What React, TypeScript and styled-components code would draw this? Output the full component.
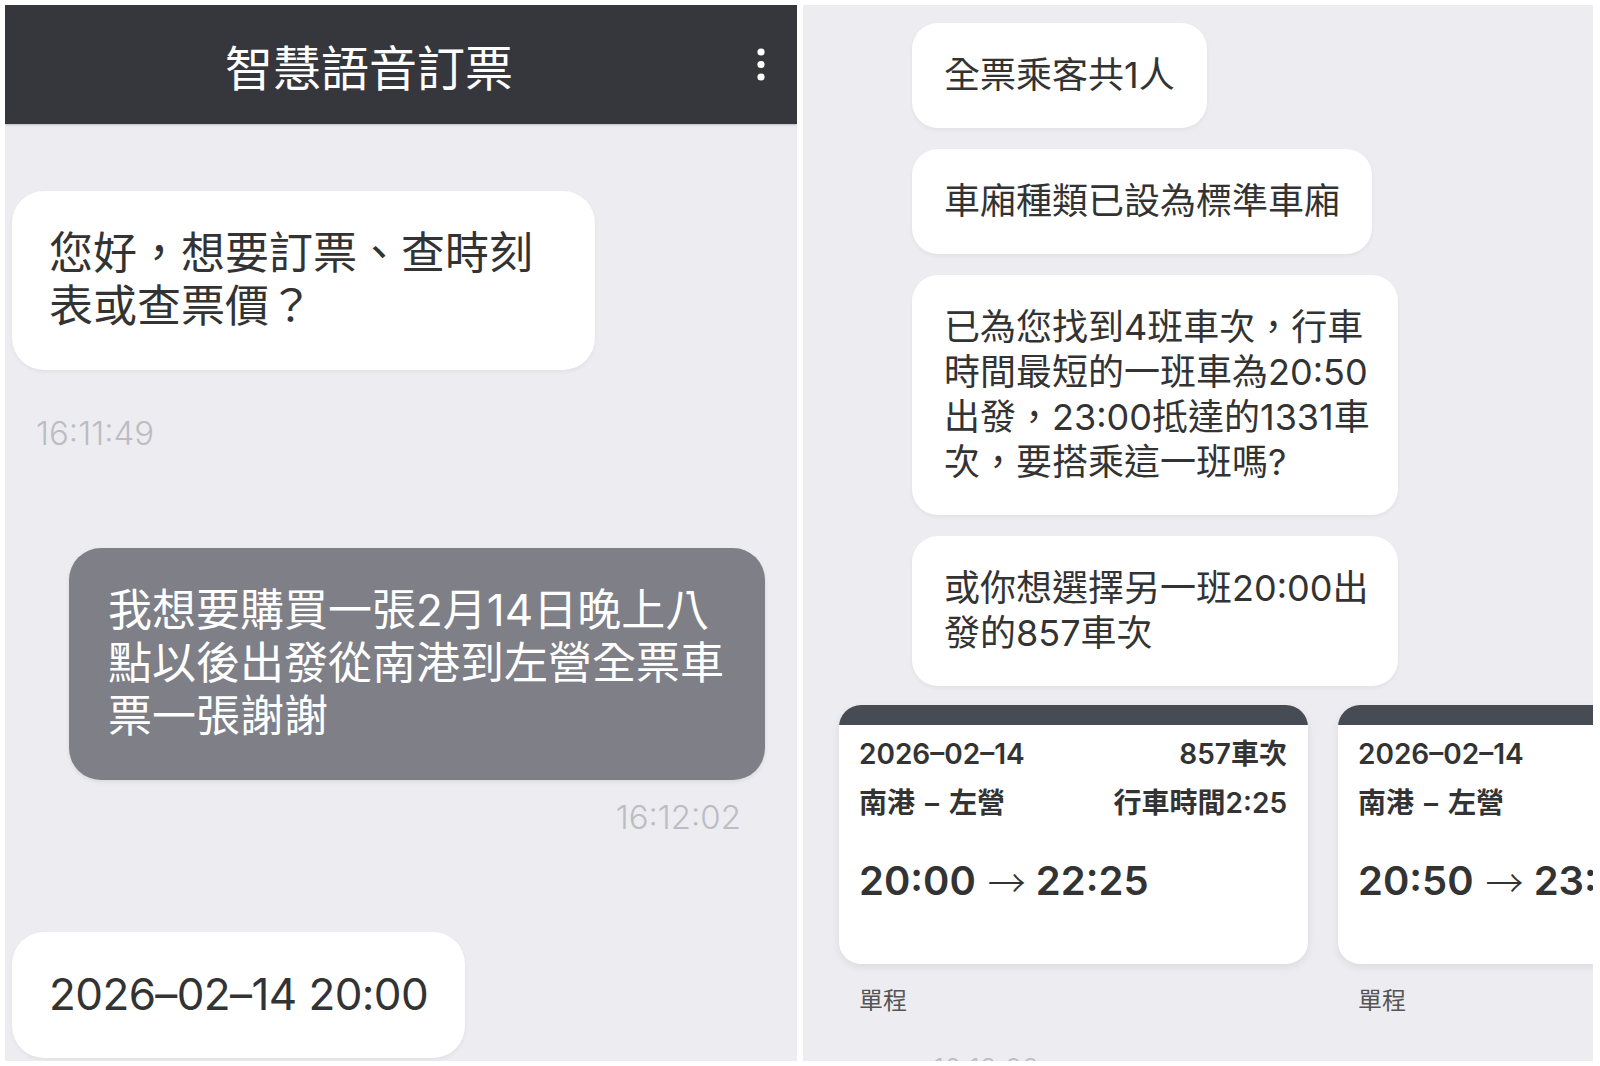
import React from "react";
import styled, { createGlobalStyle } from "styled-components";

const GlobalStyle = createGlobalStyle`
  html, body { margin: 0; padding: 0; background: #ffffff; }
  body {
    font-family: "Inter", "Noto Sans CJK TC", sans-serif;
    -webkit-font-smoothing: antialiased;
  }
  * { box-sizing: border-box; }
`;

const Page = styled.div`
  display: flex;
  gap: 6px;
  padding: 5px;
  width: 1600px;
  height: 1066px;
  overflow: hidden;
`;

const Panel = styled.section<{ $width: number }>`
  width: ${(p) => p.$width}px;
  height: 1056px;
  flex-shrink: 0;
  background: #ececf1;
  overflow: hidden;
  display: flex;
  flex-direction: column;
`;

const Header = styled.header`
  height: 119px;
  flex-shrink: 0;
  background: #35373c;
  display: flex;
  align-items: center;
  box-shadow: 0 1px 2px rgba(0, 0, 0, 0.2);
  position: relative;
  z-index: 1;
`;

const Title = styled.h1`
  flex: 1;
  margin: 0;
  text-align: center;
  color: #ffffff;
  font-family: "Noto Sans CJK TC", sans-serif;
  font-weight: 400;
  font-size: 48px;
  line-height: 1;
`;

const MenuButton = styled.div`
  width: 64px;
  padding-right: 8px;
  display: flex;
  justify-content: center;
  align-items: center;
`;

const LeftChat = styled.div`
  display: flex;
  flex-direction: column;
  align-items: flex-start;
  padding: 0 32px 0 7px;
`;

const BotBubble = styled.div<{ $width?: number; $top: number }>`
  ${(p) => (p.$width ? `width: ${p.$width}px;` : "")}
  margin-top: ${(p) => p.$top}px;
  background: #ffffff;
  color: #333333;
  border-radius: 32px;
  padding: 36px 37px 37px;
  font-size: 44px;
  line-height: 53px;
  white-space: nowrap;
  box-shadow: 0 2px 4px rgba(0, 0, 0, 0.05);
`;

const Digits = styled.span`
  letter-spacing: -0.6px;
`;

const UserBubble = styled.div<{ $width: number; $top: number }>`
  align-self: flex-end;
  width: ${(p) => p.$width}px;
  margin-top: ${(p) => p.$top}px;
  background: #7e7f87;
  color: #ffffff;
  border-radius: 32px;
  padding: 36px 39px 37px;
  font-size: 44px;
  line-height: 53px;
  white-space: nowrap;
  box-shadow: 0 2px 4px rgba(0, 0, 0, 0.08);
`;

const Timestamp = styled.div<{ $top: number; $right?: boolean; $size: number; $inset: number }>`
  margin-top: ${(p) => p.$top}px;
  ${(p) =>
    p.$right
      ? `align-self: flex-end; margin-right: ${p.$inset}px;`
      : `align-self: flex-start; margin-left: ${p.$inset}px;`}
  font-family: "Inter", sans-serif;
  font-weight: 300;
  font-size: ${(p) => p.$size}px;
  line-height: ${(p) => Math.round(p.$size * 1.1)}px;
  color: #bcbcc2;
  white-space: nowrap;
`;

const RightList = styled.div`
  display: flex;
  flex-direction: column;
  align-items: flex-start;
  gap: 21px;
  padding: 18px 0 0 109px;
`;

const SmallBubble = styled.div<{ $width?: number }>`
  ${(p) => (p.$width ? `width: ${p.$width}px;` : "")}
  background: #ffffff;
  color: #333333;
  border-radius: 26px;
  padding: 30px 32px;
  font-size: 36px;
  line-height: 45px;
  white-space: nowrap;
  box-shadow: 0 2px 4px rgba(0, 0, 0, 0.05);
`;

const Carousel = styled.div`
  display: flex;
  gap: 30px;
  margin-top: 19px;
  padding-left: 36px;
`;

const CardColumn = styled.div`
  flex-shrink: 0;
  display: flex;
  flex-direction: column;
`;

const Card = styled.div`
  width: 469px;
  height: 259px;
  background: #ffffff;
  border-radius: 22px;
  overflow: hidden;
  box-shadow: 0 3px 8px rgba(0, 0, 0, 0.08);
  display: flex;
  flex-direction: column;
`;

const CardBar = styled.div`
  height: 20px;
  flex-shrink: 0;
  background: #474b54;
`;

const CardBody = styled.div`
  padding: 12px 21px 0 20px;
  display: flex;
  flex-direction: column;
`;

const CardRow = styled.div<{ $top?: number }>`
  display: flex;
  justify-content: space-between;
  margin-top: ${(p) => p.$top ?? 0}px;
  font-size: 28px;
  line-height: 34px;
  font-weight: 600;
  color: #333333;
  white-space: nowrap;
`;

const RouteDash = styled.span`
  display: inline-block;
  margin: 0 10px;
`;

const TimeRow = styled.div`
  display: flex;
  align-items: center;
  margin-top: 37px;
  font-size: 40px;
  line-height: 48px;
  font-weight: 600;
  color: #333333;
  white-space: nowrap;
`;

const Arrow = styled.span`
  font-family: "Noto Sans CJK TC", sans-serif;
  font-weight: 300;
  font-size: 38px;
  margin: 0 10px 0 12px;
`;

const TripLabel = styled.div`
  margin-top: 20px;
  padding-left: 20px;
  font-family: "Noto Sans CJK TC", sans-serif;
  font-size: 24px;
  line-height: 30px;
  color: #555555;
`;

const KebabIcon = () => (
  <svg width="10" height="36" viewBox="0 0 10 36" aria-hidden="true">
    <circle cx="5" cy="5" r="3.6" fill="#ffffff" />
    <circle cx="5" cy="17.5" r="3.6" fill="#ffffff" />
    <circle cx="5" cy="30" r="3.6" fill="#ffffff" />
  </svg>
);

type Train = {
  date: string;
  no: string;
  from: string;
  to: string;
  duration: string;
  dep: string;
  arr: string;
};

const trains: Train[] = [
  { date: "2026–02–14", no: "857車次", from: "南港", to: "左營", duration: "行車時間2:25", dep: "20:00", arr: "22:25" },
  { date: "2026–02–14", no: "1331車次", from: "南港", to: "左營", duration: "行車時間2:10", dep: "20:50", arr: "23:00" },
];

const TrainCard = ({ t }: { t: Train }) => (
  <CardColumn>
    <Card>
      <CardBar />
      <CardBody>
        <CardRow>
          <span>{t.date}</span>
          <span>{t.no}</span>
        </CardRow>
        <CardRow $top={15}>
          <span>
            {t.from}
            <RouteDash>–</RouteDash>
            {t.to}
          </span>
          <span>{t.duration}</span>
        </CardRow>
        <TimeRow>
          <span>{t.dep}</span>
          <Arrow>→</Arrow>
          <span>{t.arr}</span>
        </TimeRow>
      </CardBody>
    </Card>
    <TripLabel>單程</TripLabel>
  </CardColumn>
);

export default function App() {
  return (
    <>
      <GlobalStyle />
      <Page>
        <Panel $width={792}>
          <Header>
            <Title>智慧語音訂票</Title>
            <MenuButton>
              <KebabIcon />
            </MenuButton>
          </Header>
          <LeftChat>
            <BotBubble $width={583} $top={67}>
              您好，想要訂票、查時刻
              <br />
              表或查票價？
            </BotBubble>
            <Timestamp $top={45} $size={33} $inset={24}>
              16:11:49
            </Timestamp>
            <UserBubble $width={696} $top={97}>
              我想要購買一張2月14日晚上八
              <br />
              點以後出發從南港到左營全票車
              <br />
              票一張謝謝
            </UserBubble>
            <Timestamp $top={19} $right $size={33} $inset={24}>
              16:12:02
            </Timestamp>
            <BotBubble $top={97}>
              <Digits>2026–02–14 20:00</Digits>
            </BotBubble>
          </LeftChat>
        </Panel>
        <Panel $width={790}>
          <RightList>
            <SmallBubble>全票乘客共1人</SmallBubble>
            <SmallBubble>車廂種類已設為標準車廂</SmallBubble>
            <SmallBubble $width={486}>
              已為您找到4班車次，行車
              <br />
              時間最短的一班車為20:50
              <br />
              出發，23:00抵達的1331車
              <br />
              次，要搭乘這一班嗎?
            </SmallBubble>
            <SmallBubble $width={486}>
              或你想選擇另一班20:00出
              <br />
              發的857車次
            </SmallBubble>
          </RightList>
          <Carousel>
            {trains.map((t) => (
              <TrainCard key={t.no} t={t} />
            ))}
          </Carousel>
          <Timestamp $top={40} $size={28} $inset={130}>
            16:12:09
          </Timestamp>
        </Panel>
      </Page>
    </>
  );
}
